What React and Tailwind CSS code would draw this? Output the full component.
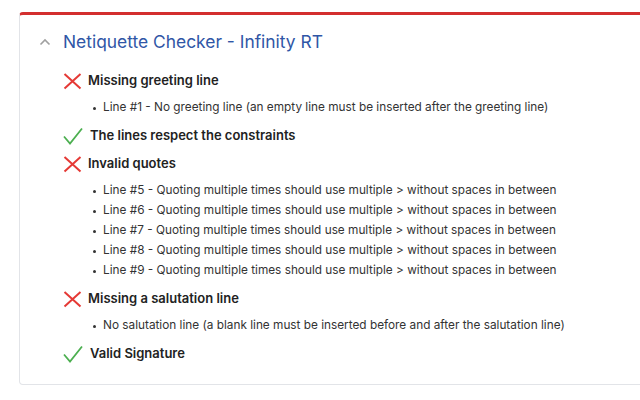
import React from "react";

const Cross = () => (
  <svg width="20" height="18" viewBox="0 0 20 18" className="shrink-0">
    <path d="M1.5 2 L17.5 16.5 M17.5 2 L1.5 16.5" stroke="#e53935" strokeWidth="2" fill="none" />
  </svg>
);

const Check = () => (
  <svg width="20" height="18" viewBox="0 0 20 18" className="shrink-0">
    <path d="M1 9.5 L7 16.5 L19 1.5" stroke="#4caf50" strokeWidth="1.8" fill="none" />
  </svg>
);

const quote = "Quoting multiple times should use multiple > without spaces in between";

const items = [
  { ok: false, title: "Missing greeting line", subs: ["Line #1 - No greeting line (an empty line must be inserted after the greeting line)"] },
  { ok: true, title: "The lines respect the constraints", subs: [] },
  { ok: false, title: "Invalid quotes", subs: [5, 6, 7, 8, 9].map((n) => `Line #${n} - ${quote}`) },
  { ok: false, title: "Missing a salutation line", subs: ["No salutation line (a blank line must be inserted before and after the salutation line)"] },
  { ok: true, title: "Valid Signature", subs: [] },
];

export default function App() {
  return (
    <div className="w-[640px] h-[400px] overflow-hidden bg-white" style={{ fontFamily: "Inter, 'Noto Sans', sans-serif" }}>
      <div className="ml-[19px] mt-[12px] w-[660px] border border-[#e2e4e8] border-t-[3px] border-t-[#d32f2f] rounded-[4px] bg-white">
        <div className="flex items-center pt-[17px] pb-[15px] pl-[19px] h-[20px] box-content">
          <svg width="12" height="8" viewBox="0 0 12 8" className="shrink-0">
            <path d="M1.5 6.5 L6 2 L10.5 6.5" stroke="#a0a0a0" strokeWidth="1.6" fill="none" />
          </svg>
          <div className="ml-[12px] text-[17.4px] leading-[20px] text-[#3056a6] whitespace-nowrap">Netiquette Checker - Infinity RT</div>
        </div>
        <div className="pl-[43px] pb-[16px]">
          {items.map((it, i) => (
            <div key={i}>
              <div className="flex items-center h-[28px]">
                {it.ok ? <Check /> : <Cross />}
                <div className={`${it.ok ? "ml-[7px]" : "ml-[5px]"} text-[13px] font-semibold text-[#222] whitespace-nowrap`}>{it.title}</div>
              </div>
              {it.subs.length > 0 && (
                <div className="mt-[3px] mb-[4px]">
                  {it.subs.map((s, j) => (
                    <div key={j} className="flex items-center h-[20px] pl-[30px]">
                      <span className="w-[3px] h-[3px] rounded-full bg-[#333] shrink-0" />
                      <span className="ml-[7px] text-[11.8px] text-[#333] whitespace-nowrap">{s}</span>
                    </div>
                  ))}
                </div>
              )}
            </div>
          ))}
        </div>
      </div>
    </div>
  );
}
